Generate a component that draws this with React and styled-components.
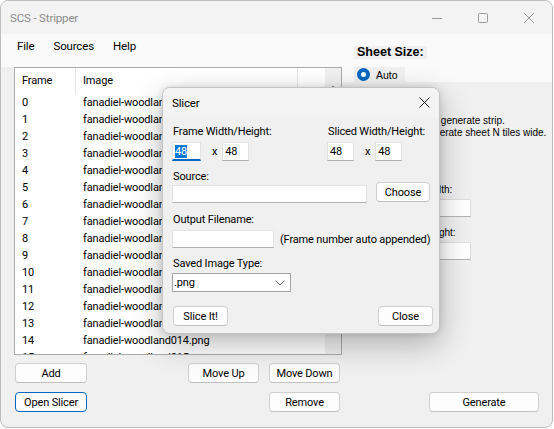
import React from 'react'
import styled, { createGlobalStyle } from 'styled-components'

const UI = `Roboto, "Noto Sans", sans-serif`
const CLASSIC = `"Liberation Sans", Arial, sans-serif`

const GlobalStyle = createGlobalStyle`
  html, body {
    margin: 0;
    padding: 0;
    background: #ffffff;
  }
  * {
    box-sizing: border-box;
  }
`

const frames = Array.from({ length: 16 }, (_, i) => ({
    frame: i,
    image: `fanadiel-woodland${String(i).padStart(3, '0')}.png`
}))

const App = () => {
    return (
        <>
            <GlobalStyle />
            <Window>
                <TitleBar>
                    <Title>SCS - Stripper</Title>
                    <WinControls>
                        <WinButton>
                            <svg width="10" height="10" viewBox="0 0 10 10">
                                <path d="M0 5.5h10" stroke="#9b9b9b" strokeWidth="1" />
                            </svg>
                        </WinButton>
                        <WinButton>
                            <svg width="10" height="10" viewBox="0 0 10 10">
                                <rect x="0.5" y="0.5" width="9" height="9" rx="1" fill="none" stroke="#9b9b9b" />
                            </svg>
                        </WinButton>
                        <WinButton>
                            <svg width="10" height="10" viewBox="0 0 10 10">
                                <path d="M0 0L10 10M10 0L0 10" stroke="#9b9b9b" strokeWidth="1" />
                            </svg>
                        </WinButton>
                    </WinControls>
                </TitleBar>

                <Body>
                    <LeftColumn>
                        <MenuBar>
                            <MenuItem>File</MenuItem>
                            <MenuItem>Sources</MenuItem>
                            <MenuItem>Help</MenuItem>
                        </MenuBar>

                        <ListBox>
                            <Table>
                                <HeaderRow>
                                    <HeaderCell $width={61}>Frame</HeaderCell>
                                    <HeaderCell $width={222}>Image</HeaderCell>
                                </HeaderRow>
                                {frames.map(f => (
                                    <Row key={f.frame}>
                                        <Cell $width={61}>{f.frame}</Cell>
                                        <Cell $width={222}>{f.image}</Cell>
                                    </Row>
                                ))}
                            </Table>
                            <ScrollTrack>
                                <ScrollDot />
                            </ScrollTrack>
                        </ListBox>

                        <ButtonRow>
                            <Button $width={72}>Add</Button>
                            <Spacer />
                            <Button $width={71}>Move Up</Button>
                            <Button $width={71}>Move Down</Button>
                        </ButtonRow>
                        <ButtonRow $gap={9}>
                            <Button $width={72} $focused>Open Slicer</Button>
                            <Spacer />
                            <Button $width={71}>Remove</Button>
                        </ButtonRow>
                    </LeftColumn>

                    <RightColumn>
                        <TopBox>
                            <SheetLabel>Sheet Size:</SheetLabel>
                            <RadioOption>
                                <RadioDot $checked />
                                Auto
                            </RadioOption>
                        </TopBox>
                        <Options>
                            <RadioOption $plain>
                                <RadioDot />
                                Fixed
                            </RadioOption>
                            <Hint $top={12} $indent={11}>Columns = 0 will generate strip.</Hint>
                            <Hint $indent={7}>Columns &gt; 0: generate sheet N tiles wide.</Hint>
                            <Field $top={45}>
                                <SmallLabel>Sheet Width:</SmallLabel>
                                <SideInput />
                            </Field>
                            <Field $top={10}>
                                <SmallLabel>Sheet Height:</SmallLabel>
                                <SideInput />
                            </Field>
                        </Options>
                        <GenerateButton>Generate</GenerateButton>
                    </RightColumn>
                </Body>

                <Dialog>
                    <DialogTitle>
                        <span>Slicer</span>
                        <DialogClose>
                            <svg width="11" height="11" viewBox="0 0 11 11">
                                <path d="M0.5 0.5L10.5 10.5M10.5 0.5L0.5 10.5" stroke="#1a1a1a" strokeWidth="1" />
                            </svg>
                        </DialogClose>
                    </DialogTitle>
                    <DialogBody>
                        <SizeRow>
                            <SizeGroup $width={155}>
                                <FieldLabel>Frame Width/Height:</FieldLabel>
                                <InputLine>
                                    <TextBox $width={29} $focused>
                                        <Selected>48</Selected>
                                    </TextBox>
                                    <Cross>x</Cross>
                                    <TextBox $width={27}>48</TextBox>
                                </InputLine>
                            </SizeGroup>
                            <SizeGroup>
                                <FieldLabel>Sliced Width/Height:</FieldLabel>
                                <InputLine>
                                    <TextBox $width={27}>48</TextBox>
                                    <Cross>x</Cross>
                                    <TextBox $width={27}>48</TextBox>
                                </InputLine>
                            </SizeGroup>
                        </SizeRow>

                        <FieldLabel $top={8}>Source:</FieldLabel>
                        <SourceRow>
                            <TextBox $width={195} $offset={3} $height={18} />
                            <Button $width={54}>Choose</Button>
                        </SourceRow>

                        <FieldLabel $top={9}>Output Filename:</FieldLabel>
                        <OutputRow>
                            <TextBox $width={102} $height={18} />
                            <Note>(Frame number auto appended)</Note>
                        </OutputRow>

                        <FieldLabel $top={8}>Saved Image Type:</FieldLabel>
                        <Select>
                            <span>.png</span>
                            <svg width="10" height="6" viewBox="0 0 10 6">
                                <path d="M0.5 0.5L5 5L9.5 0.5" fill="none" stroke="#5a5a5a" strokeWidth="1" />
                            </svg>
                        </Select>

                        <DialogFooter>
                            <Button $width={55}>Slice It!</Button>
                            <Button $width={55}>Close</Button>
                        </DialogFooter>
                    </DialogBody>
                </Dialog>
            </Window>
        </>
    )
}

const Window = styled.div`
    position: relative;
    width: 553px;
    height: 428px;
    border: 1px solid #bdbdbd;
    border-radius: 8px;
    background: #f0f0f0;
    overflow: hidden;
    display: flex;
    flex-direction: column;
    font-family: ${UI};
    font-size: 11px;
    letter-spacing: -0.15px;
    color: #000;
`

const TitleBar = styled.div`
    height: 33px;
    flex-shrink: 0;
    display: flex;
    align-items: center;
    justify-content: space-between;
    background: #f3f3f3;
    padding-left: 9px;
`

const Title = styled.span`
    color: #8b8b8b;
    font-size: 11.5px;
`

const WinControls = styled.div`
    display: flex;
    height: 100%;
`

const WinButton = styled.div`
    width: 46px;
    height: 100%;
    display: flex;
    align-items: center;
    justify-content: center;
`

const Body = styled.div`
    flex: 1;
    display: flex;
    min-height: 0;
`

const LeftColumn = styled.div`
    width: 341px;
    display: flex;
    flex-direction: column;
`

const MenuBar = styled.div`
    height: 33px;
    display: flex;
    align-items: flex-start;
    padding: 4px 0 0 6.5px;
    background: #fafafa;
    font-size: 11.5px;
`

const MenuItem = styled.div`
    padding: 0 9.5px;
    line-height: 16px;
`

const ListBox = styled.div`
    margin-left: 13px;
    width: 328px;
    height: 288px;
    border: 1px solid #ababab;
    background: #fff;
    display: flex;
    overflow: hidden;
`

const Table = styled.div`
    flex: 1;
    overflow: hidden;
`

const HeaderRow = styled.div`
    display: flex;
    height: 26px;
`

const HeaderCell = styled.div`
    width: ${p => p.$width}px;
    padding-left: 7px;
    line-height: 26px;
    border-right: 1px solid #e5e5e5;
    white-space: nowrap;
`

const Row = styled.div`
    display: flex;
    height: 17px;
    line-height: 17px;
`

const Cell = styled.div`
    width: ${p => p.$width}px;
    padding-left: 7px;
    white-space: nowrap;
`

const ScrollTrack = styled.div`
    width: 16px;
    background: #f0f0f0;
    position: relative;
`

const ScrollDot = styled.div`
    position: absolute;
    top: 18px;
    left: 7px;
    width: 2px;
    height: 2px;
    background: #8a8a8a;
`

const ButtonRow = styled.div`
    display: flex;
    gap: 10px;
    margin-top: ${p => p.$gap ?? 8}px;
    padding: 0 2px 0 14px;
`

const Spacer = styled.div`
    flex: 1;
`

const Button = styled.div`
    width: ${p => p.$width}px;
    height: 20px;
    flex-shrink: 0;
    display: flex;
    align-items: center;
    justify-content: center;
    background: #fdfdfd;
    border: 1px solid ${p => (p.$focused ? '#0067c0' : '#d0d0d0')};
    border-bottom-color: ${p => (p.$focused ? '#0067c0' : '#c0c0c0')};
    border-radius: 4px;
    white-space: nowrap;
`

const RightColumn = styled.div`
    flex: 1;
    display: flex;
    flex-direction: column;
    min-width: 0;
`

const TopBox = styled.div`
    height: 48px;
    background: #fafafa;
    padding: 12px 0 0 12px;
    display: flex;
    flex-direction: column;
    align-items: flex-start;
`

const SheetLabel = styled.div`
    height: 13px;
    line-height: 13px;
    padding: 0 3px;
    background: #f0f0f0;
    font-family: ${CLASSIC};
    font-size: 12.5px;
    font-weight: bold;
    letter-spacing: 0;
`

const RadioOption = styled.div`
    display: flex;
    align-items: center;
    gap: 6px;
    height: 15px;
    margin-top: ${p => (p.$plain ? 6 : 8)}px;
    padding: 0 7px 0 3px;
    background: #f0f0f0;
    font-family: ${CLASSIC};
    font-size: 10.5px;
    letter-spacing: 0;
`

const RadioDot = styled.span`
    width: 13px;
    height: 13px;
    border-radius: 50%;
    background: #fff;
    border: ${p => (p.$checked ? '4px solid #0067c0' : '1px solid #8a8a8a')};
`

const Options = styled.div`
    padding-left: 12px;
    display: flex;
    flex-direction: column;
    align-items: flex-start;
`

const Hint = styled.div`
    margin-top: ${p => p.$top ?? 0}px;
    padding-left: ${p => p.$indent}px;
    font-family: ${CLASSIC};
    font-size: 10px;
    line-height: 12px;
    letter-spacing: 0;
    white-space: nowrap;
`

const Field = styled.div`
    margin-top: ${p => p.$top}px;
    margin-left: 37px;
    display: flex;
    flex-direction: column;
`

const SmallLabel = styled.div`
    padding-left: 4px;
    font-family: ${CLASSIC};
    font-size: 10px;
    line-height: 12px;
    letter-spacing: 0;
    white-space: nowrap;
`

const SideInput = styled.div`
    margin-top: 3px;
    width: 80px;
    height: 18px;
    background: #fff;
    border: 1px solid #dedede;
    border-bottom-color: #b5b5b5;
`

const GenerateButton = styled(Button)`
    width: 110px;
    margin: auto 13px 15px auto;
`

const Dialog = styled.div`
    position: absolute;
    left: 161px;
    top: 86px;
    width: 278px;
    height: 247px;
    background: #f0f0f0;
    border: 1px solid #c4c4c4;
    border-radius: 8px;
    box-shadow: 0 10px 30px rgba(0, 0, 0, 0.28), 0 0 6px rgba(0, 0, 0, 0.12);
    display: flex;
    flex-direction: column;
    overflow: hidden;
`

const DialogTitle = styled.div`
    height: 29px;
    display: flex;
    align-items: center;
    justify-content: space-between;
    padding-left: 9px;
    background: #f3f3f3;
    font-size: 11.5px;
`

const DialogClose = styled.div`
    width: 30px;
    height: 100%;
    display: flex;
    align-items: center;
    justify-content: center;
`

const DialogBody = styled.div`
    padding: 0 6px 0 9px;
    display: flex;
    flex-direction: column;
    align-items: flex-start;
`

const SizeRow = styled.div`
    display: flex;
    margin-top: 7px;
`

const SizeGroup = styled.div`
    width: ${p => (p.$width ? `${p.$width}px` : 'auto')};
    display: flex;
    flex-direction: column;
`

const FieldLabel = styled.div`
    line-height: 15px;
    margin-top: ${p => p.$top ?? 0}px;
    padding-left: 1px;
    white-space: nowrap;
`

const InputLine = styled.div`
    display: flex;
    align-items: center;
    margin-top: 3px;
`

const TextBox = styled.div`
    width: ${p => p.$width}px;
    height: ${p => p.$height ?? 19}px;
    margin-top: ${p => p.$offset ?? 0}px;
    flex-shrink: 0;
    background: #fff;
    border: 1px solid #e3e3e3;
    border-bottom: ${p => (p.$focused ? '2px solid #0067c0' : '1px solid #b0b0b0')};
    padding-left: 2px;
    line-height: 17px;
`

const Selected = styled.span`
    background: #0078d7;
    color: #fff;
`

const Cross = styled.span`
    margin: 0 5px 0 11px;
`

const SourceRow = styled.div`
    display: flex;
    align-items: flex-start;
    gap: 9px;
    margin-top: -2px;
`

const OutputRow = styled.div`
    display: flex;
    align-items: center;
    gap: 6px;
    margin-top: 3px;
`

const Note = styled.span`
    white-space: nowrap;
`

const Select = styled.div`
    width: 119px;
    height: 19px;
    margin-top: 2px;
    display: flex;
    align-items: center;
    justify-content: space-between;
    padding: 0 5px 0 1px;
    background: #fff;
    border: 1px solid #a3a3a3;
`

const DialogFooter = styled.div`
    align-self: stretch;
    display: flex;
    justify-content: space-between;
    margin-top: 14px;
    padding-left: 1px;
`

export default App
